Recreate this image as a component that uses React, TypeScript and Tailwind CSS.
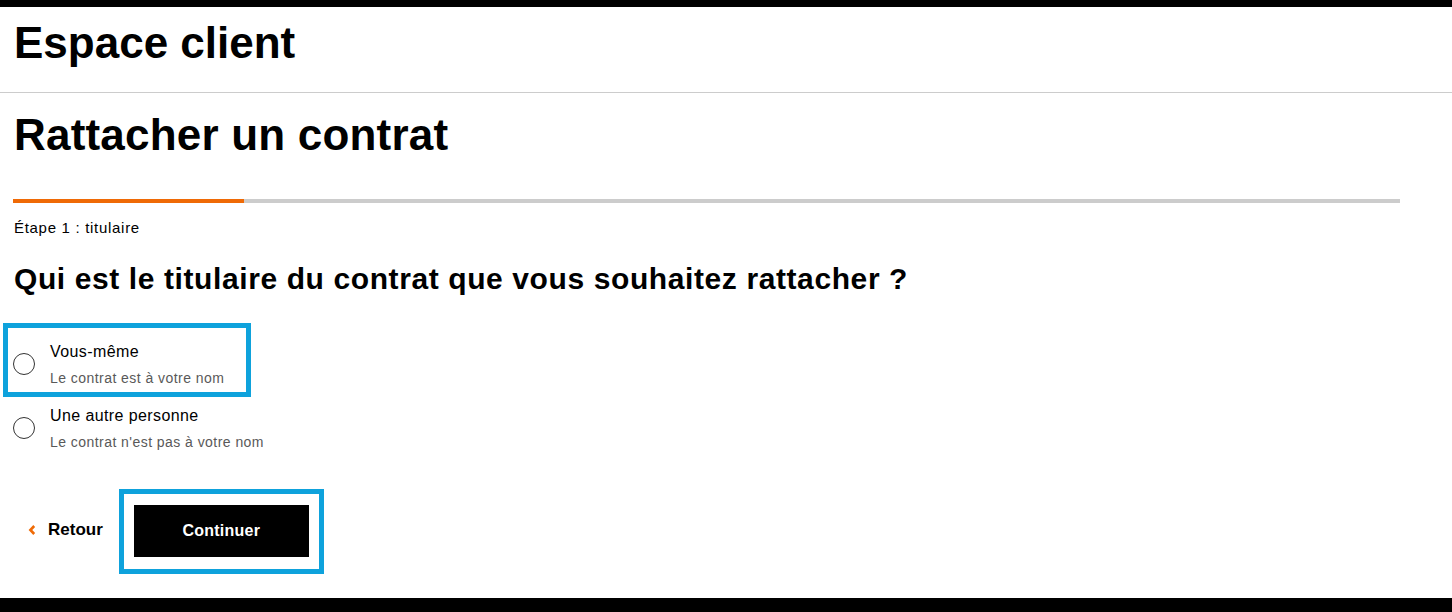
import React from "react";

function Circle() {
  return <span className="block w-[22px] h-[22px] rounded-full border border-[#333333] bg-white shrink-0" />;
}

function Texts({ title, sub, pt }: { title: string; sub: string; pt: string }) {
  return (
    <span className={`flex flex-col ${pt}`}>
      <span className="text-[16px] leading-[20px] tracking-[0.4px] text-black">{title}</span>
      <span className="text-[14px] leading-[18px] tracking-[0.45px] mt-[6.5px] text-[#595959]">{sub}</span>
    </span>
  );
}

export default function App() {
  return (
    <div className="w-[1452px] h-[612px] bg-white flex flex-col font-['Liberation_Sans',Arial,sans-serif] text-black overflow-hidden">
      <div className="h-[7px] bg-black shrink-0" />
      <header className="h-[86px] border-b border-[#cccccc] px-[13px] pt-[12px] shrink-0">
        <h1 className="text-[44px] leading-[48px] font-bold pl-[1px]">Espace client</h1>
      </header>
      <main className="flex-1 flex flex-col px-[13px]">
        <h2 className="text-[44px] leading-[48px] tracking-[0.2px] font-bold mt-[18px] pl-[1px]">Rattacher un contrat</h2>
        <div className="mt-[40px] w-[1387px] h-[4px] bg-[#cccccc] flex">
          <div className="w-[231px] h-full bg-[#ef6a06]" />
        </div>
        <p className="text-[15px] leading-[18px] tracking-[0.7px] mt-[16px] pl-[1px]">Étape 1 : titulaire</p>
        <h3 className="text-[30px] leading-[34px] tracking-[0.6px] font-bold mt-[25px] pl-[1px]">
          Qui est le titulaire du contrat que vous souhaitez rattacher ?
        </h3>
        <div className="mt-[27px] flex flex-col -ml-[10px]">
          <div className="w-[248px] h-[74px] border-[5px] border-[#0ea2dc] flex items-start gap-[15px] pl-[5px]">
            <span className="mt-[25px]"><Circle /></span>
            <Texts title="Vous-même" sub="Le contrat est à votre nom" pt="pt-[14px]" />
          </div>
          <div className="flex items-start gap-[15px] pl-[10px]">
            <span className="mt-[20px]"><Circle /></span>
            <Texts title="Une autre personne" sub="Le contrat n'est pas à votre nom" pt="pt-[9px]" />
          </div>
        </div>
        <div className="mt-[38px] flex items-center">
          <button className="flex items-center gap-[12px] pl-[15px] pr-[16px] mt-[-2px] text-[17px] leading-[20px] font-bold">
            <svg width="8" height="10" viewBox="0 0 8 10">
              <path d="M6.2 1 L2.4 5 L6.2 9" stroke="#ef6a06" strokeWidth="2.6" fill="none" />
            </svg>
            Retour
          </button>
          <div className="border-[5px] border-[#0ea2dc] px-[10px] pt-[11px] pb-[12px]">
            <button className="w-[175px] h-[52px] bg-black text-white text-[16px] tracking-[0.25px] font-bold">Continuer</button>
          </div>
        </div>
      </main>
      <div className="h-[14px] bg-black shrink-0" />
    </div>
  );
}
